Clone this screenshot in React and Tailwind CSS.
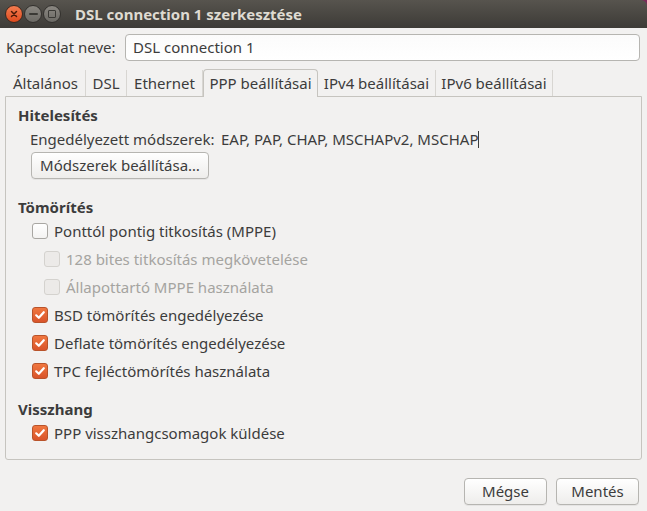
import React from 'react';

const font = { fontFamily: '"Noto Sans", "Open Sans", sans-serif' };

const tabs = [
  { label: 'Általános', w: 'w-[80px]' },
  { label: 'DSL', w: 'w-[41px]' },
  { label: 'Ethernet', w: 'w-[76px]' },
  { label: 'PPP beállításai', w: 'w-[115px]' },
  { label: 'IPv4 beállításai', w: 'w-[118px]' },
  { label: 'IPv6 beállításai', w: 'w-[117px]' },
];

const CheckBox = ({ checked, disabled }) => {
  if (checked) {
    return (
      <span className="w-[16px] h-[16px] rounded-[3px] border border-[#b9532a] bg-gradient-to-b from-[#f0773f] to-[#d9542a] flex items-center justify-center shrink-0">
        <svg width="12" height="12" viewBox="0 0 12 12">
          <path d="M2.2 6.3 L4.8 8.8 L9.8 3.2" fill="none" stroke="#fff" strokeWidth="2.2" strokeLinecap="round" strokeLinejoin="round" />
        </svg>
      </span>
    );
  }
  return (
    <span
      className={
        'w-[16px] h-[16px] rounded-[3px] border shrink-0 ' +
        (disabled ? 'border-[#d4d2ce] bg-[#eceae8]' : 'border-[#a9a7a3] bg-gradient-to-b from-white to-[#f4f3f2]')
      }
    />
  );
};

const Row = ({ label, checked, disabled, indent }) => (
  <div className={'flex items-center gap-[6px] h-[28px] ' + (indent ? 'pl-[38px]' : 'pl-[26px]')}>
    <CheckBox checked={checked} disabled={disabled} />
    <span className={disabled ? 'text-[#a5a4a0]' : 'text-[#3c3c3c]'}>{label}</span>
  </div>
);

const Button = ({ children, className }) => (
  <button className={'h-[27px] rounded-[4px] border border-[#b6b5b1] bg-gradient-to-b from-white to-[#eeedeb] text-[#3c3c3c] shadow-[0_1px_0_rgba(0,0,0,0.05)] ' + className}>
    {children}
  </button>
);

export default function App() {
  return (
    <div style={font} className="w-[647px] h-[511px] bg-[#f2f1f0] text-[15px] text-[#3c3c3c] flex flex-col overflow-hidden">
      {/* title bar */}
      <div className="h-[28px] bg-[#7a2a5a] shrink-0">
        <div className="h-[28px] rounded-tr-[6px] bg-gradient-to-b from-[#57544e] to-[#3d3b37] flex items-center pl-[5px]">
          <div className="flex items-center gap-[1px]">
            <span className="w-[18px] h-[18px] rounded-full bg-gradient-to-b from-[#f37c4f] to-[#df4a1c] border border-[#3a2a22] flex items-center justify-center">
              <svg width="8" height="8" viewBox="0 0 8 8">
                <path d="M1.5 1.5 L6.5 6.5 M6.5 1.5 L1.5 6.5" stroke="#4a1a08" strokeWidth="1.5" strokeLinecap="round" />
              </svg>
            </span>
            <span className="w-[18px] h-[18px] rounded-full bg-gradient-to-b from-[#8a8781] to-[#6c6a65] border border-[#33312e] flex items-center justify-center">
              <span className="w-[9px] h-[2px] bg-[#3a3935] rounded" />
            </span>
            <span className="w-[18px] h-[18px] rounded-full bg-gradient-to-b from-[#8a8781] to-[#6c6a65] border border-[#33312e] flex items-center justify-center">
              <span className="w-[8px] h-[8px] border-[1.5px] border-[#3a3935] rounded-[1px]" />
            </span>
          </div>
          <span className="ml-[14px] font-bold text-[15px] text-[#dfdbd2]">DSL connection 1 szerkesztése</span>
        </div>
      </div>

      {/* name row */}
      <div className="flex items-center mt-[6px] pl-[6px] pr-[7px]">
        <span className="w-[119px]">Kapcsolat neve:</span>
        <div className="flex-1 h-[27px] rounded-[4px] border border-[#b6b5b1] bg-gradient-to-b from-[#fbfbfb] to-white flex items-center px-[7px]">
          DSL connection 1
        </div>
      </div>

      {/* tabs */}
      <div className="flex items-end h-[35px] pl-[6px]">
        {tabs.map((t, i) => {
          const active = i === 3;
          return (
            <div
              key={t.label}
              className={
                t.w +
                (active
                  ? ' h-[28px] flex items-center justify-center whitespace-nowrap rounded-t-[4px] border border-b-0 border-[#c6c4bf] bg-[#f2f1f0] relative top-[1px] z-10'
                  : ' h-[26px] flex items-center justify-center whitespace-nowrap border-r border-[#d8d6d2]')
              }
            >
              {t.label}
            </div>
          );
        })}
      </div>

      {/* panel */}
      <div className="mx-[5px] h-[364px] border border-[#c6c4bf] rounded-b-[3px] pt-[8px] pl-[12px]">
        <div className="font-bold h-[20px] flex items-center">Hitelesítés</div>
        <div className="flex items-center h-[26px] pl-[12px] mt-[1px]">
          <span className="w-[191px]">Engedélyezett módszerek:</span>
          <span>EAP, PAP, CHAP, MSCHAPv2, MSCHAP</span>
          <span className="w-[1px] h-[17px] bg-[#3c3c3c]" />
        </div>
        <div className="pl-[13px]">
          <Button className="w-[178px]">Módszerek beállítása…</Button>
        </div>

        <div className="font-bold h-[20px] flex items-center mt-[18px]">Tömörítés</div>
        <div className="-ml-[12px]">
          <Row label="Ponttól pontig titkosítás (MPPE)" />
          <Row label="128 bites titkosítás megkövetelése" disabled indent />
          <Row label="Állapottartó MPPE használata" disabled indent />
          <Row label="BSD tömörítés engedélyezése" checked />
          <Row label="Deflate tömörítés engedélyezése" checked />
          <Row label="TPC fejléctömörítés használata" checked />
        </div>

        <div className="font-bold h-[20px] flex items-center mt-[14px]">Visszhang</div>
        <div className="-ml-[12px]">
          <Row label="PPP visszhangcsomagok küldése" checked />
        </div>
      </div>

      {/* footer */}
      <div className="flex justify-end gap-[9px] pr-[8px] mt-[18px]">
        <Button className="w-[83px]">Mégse</Button>
        <Button className="w-[83px]">Mentés</Button>
      </div>
    </div>
  );
}
